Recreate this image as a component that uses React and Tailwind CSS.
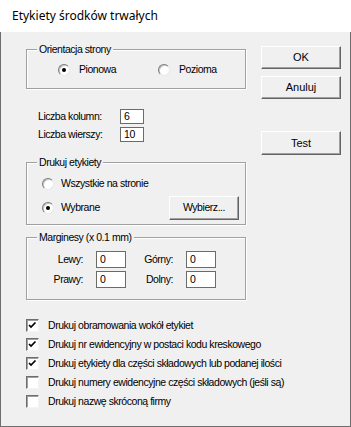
import React from "react";

function Radio({ checked }) {
  return (
    <span className="relative inline-block w-[12px] h-[12px] rounded-full bg-white border border-t-[#7a7a7a] border-l-[#7a7a7a] border-b-[#e8e8e8] border-r-[#e8e8e8] shadow-[inset_1px_1px_0_#c8c8c8] shrink-0">
      {checked && (
        <span className="absolute left-[3px] top-[3px] w-[4px] h-[4px] rounded-full bg-black" />
      )}
    </span>
  );
}

function Check({ checked }) {
  return (
    <span className="inline-flex items-center justify-center w-[13px] h-[13px] bg-white border border-t-[#6d6d6d] border-l-[#6d6d6d] border-b-[#f4f4f4] border-r-[#f4f4f4] shadow-[inset_1px_1px_0_#a0a0a0] shrink-0">
      {checked && (
        <svg width="9" height="9" viewBox="0 0 9 9">
          <path d="M1 4 L3 6 L7.5 1.5" stroke="#000" strokeWidth="1.7" fill="none" />
        </svg>
      )}
    </span>
  );
}

function Button({ children, className }) {
  return (
    <div
      className={
        "flex items-center justify-center bg-[#f0f0f0] border border-t-white border-l-white border-b-[#646464] border-r-[#646464] shadow-[inset_-1px_-1px_0_#a0a0a0] " +
        className
      }
    >
      {children}
    </div>
  );
}

function Group({ label, className, children }) {
  return (
    <div
      className={
        "relative border border-[#a0a0a0] shadow-[1px_1px_0_#fff,inset_1px_1px_0_#fff] " +
        className
      }
    >
      <span className="absolute left-[10px] -top-[8px] px-[2px] bg-[#f0f0f0] leading-[14px]">
        {label}
      </span>
      {children}
    </div>
  );
}

function Field({ value, className }) {
  return (
    <div
      className={
        "bg-white border border-[#6b6b6b] pl-[3px] flex items-center leading-none " +
        className
      }
    >
      {value}
    </div>
  );
}

export default function App() {
  const checks = [
    { t: "Drukuj obramowania wokół etykiet", c: true },
    { t: "Drukuj nr ewidencyjny w postaci kodu kreskowego", c: true },
    { t: "Drukuj etykiety dla części składowych lub podanej ilości", c: true },
    { t: "Drukuj numery ewidencyjne części składowych (jeśli są)", c: false },
    { t: "Drukuj nazwę skróconą firmy", c: false },
  ];

  return (
    <div className="w-[351px] h-[427px] flex flex-col bg-white text-black font-['Liberation_Sans',Arial,sans-serif] text-[10.5px] tracking-[-0.45px]">
      {/* title bar */}
      <div className="h-[32px] flex items-center pl-[12px] text-[12px] tracking-normal font-['Noto_Sans',sans-serif] shrink-0">
        Etykiety środków trwałych
      </div>

      <div className="flex-1 flex bg-[#f0f0f0] border-l border-r border-b border-[#6e6e6e] pl-[25px]">
        {/* left column */}
        <div className="w-[220px] flex flex-col">
          <Group label="Orientacja strony" className="mt-[17px] h-[40px]">
            <div className="flex items-center h-full pl-[31px] pt-[2px]">
              <div className="flex items-center gap-[9px] w-[100px]">
                <Radio checked />
                <span>Pionowa</span>
              </div>
              <div className="flex items-center gap-[9px]">
                <Radio />
                <span>Pozioma</span>
              </div>
            </div>
          </Group>

          <div className="mt-[20px] flex flex-col gap-[3px] pl-[12px]">
            <div className="flex items-center h-[15px]">
              <span className="w-[82px]">Liczba kolumn:</span>
              <Field value="6" className="w-[24px] h-[15px]" />
            </div>
            <div className="flex items-center h-[15px]">
              <span className="w-[82px]">Liczba wierszy:</span>
              <Field value="10" className="w-[24px] h-[15px]" />
            </div>
          </div>

          <Group label="Drukuj etykiety" className="mt-[20px] h-[63px]">
            <div className="flex flex-col pl-[15px] pt-[14px]">
              <div className="flex items-center gap-[7px] h-[13px]">
                <Radio />
                <span>Wszystkie na stronie</span>
              </div>
              <div className="flex items-center mt-[6px] h-[24px]">
                <div className="flex items-center gap-[7px] w-[127px]">
                  <Radio checked />
                  <span>Wybrane</span>
                </div>
                <Button className="w-[70px] h-[24px]">Wybierz...</Button>
              </div>
            </div>
          </Group>

          <Group label="Marginesy (x 0.1 mm)" className="mt-[12px] h-[63px]">
            <div className="flex flex-col gap-[3px] pt-[13px]">
              <div className="flex items-center">
                <span className="w-[56px] text-right">Lewy:</span>
                <Field value="0" className="ml-[13px] w-[30px] h-[17px]" />
                <span className="w-[47px] text-right">Górny:</span>
                <Field value="0" className="ml-[13px] w-[30px] h-[17px]" />
              </div>
              <div className="flex items-center">
                <span className="w-[56px] text-right">Prawy:</span>
                <Field value="0" className="ml-[13px] w-[30px] h-[17px]" />
                <span className="w-[47px] text-right">Dolny:</span>
                <Field value="0" className="ml-[13px] w-[30px] h-[17px]" />
              </div>
            </div>
          </Group>

          <div className="mt-[19px] flex flex-col gap-[6px]">
            {checks.map((c, i) => (
              <div key={i} className="flex items-center gap-[9px] h-[13px] whitespace-nowrap">
                <Check checked={c.c} />
                <span>{c.t}</span>
              </div>
            ))}
          </div>
        </div>

        {/* right column */}
        <div className="ml-[15px] w-[80px] flex flex-col text-[11px] tracking-normal">
          <Button className="mt-[14px] h-[23px]">OK</Button>
          <Button className="mt-[7px] h-[23px]">Anuluj</Button>
          <Button className="mt-[32px] h-[24px]">Test</Button>
        </div>
      </div>
    </div>
  );
}
